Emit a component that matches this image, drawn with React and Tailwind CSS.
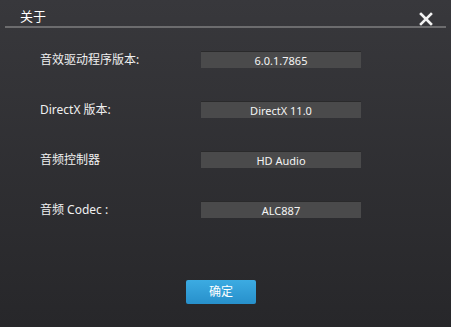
export default function App() {
  const rows = [
    ["音效驱动程序版本:", "6.0.1.7865"],
    ["DirectX 版本:", "DirectX 11.0"],
    ["音频控制器", "HD Audio"],
    ["音频 Codec :", "ALC887"],
  ];
  return (
    <div
      className="w-[451px] h-[327px] relative overflow-hidden bg-gradient-to-b from-[#38383c] to-[#27272a] text-white flex flex-col"
      style={{ fontFamily: '"Noto Sans", "Noto Sans CJK SC", sans-serif' }}
    >
      <div className="h-[26px] flex items-start justify-between pl-[20px] pr-[18px] pt-[7px]">
        <span className="text-[13px] leading-[18px]">关于</span>
        <svg width="14" height="14" viewBox="0 0 14 14" className="mt-[5px]">
          <path d="M2 2 L12 12 M12 2 L2 12" stroke="#f2f2f2" strokeWidth="2.6" strokeLinecap="square" />
        </svg>
      </div>
      <div className="mx-[5px] h-[2px] bg-[#6c6c6e]" />
      <div className="flex flex-col gap-[33px] pt-[23px]">
        {rows.map(([l, v]) => (
          <div key={l} className="flex items-center h-[17px]">
            <div className="w-[201px] pl-[40px] text-[12px] text-[#f0f0f0] whitespace-nowrap leading-[17px]">{l}</div>
            <div className="w-[160px] h-[17px] bg-[#4a4a4b] border-t border-[#2a2a2b] flex items-center justify-center text-[11px] text-[#f4f4f4] leading-none">
              {v}
            </div>
          </div>
        ))}
      </div>
      <div className="flex pt-[62px] pl-[186px]">
        <div className="w-[70px] h-[24px] bg-gradient-to-b from-[#3cabe2] to-[#2790cb] rounded-[2px] flex items-center justify-center text-[12px] text-white">
          确定
        </div>
      </div>
    </div>
  );
}
